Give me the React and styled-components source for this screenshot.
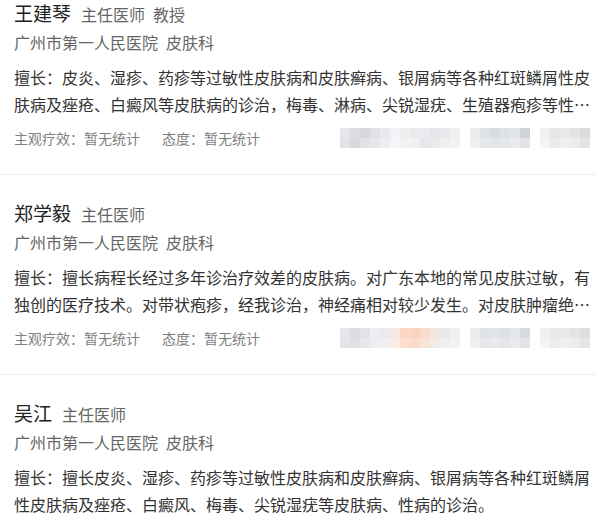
import React from "react"
import styled, { createGlobalStyle } from "styled-components"

const GlobalStyle = createGlobalStyle`
  body {
    margin: 0;
    background: #fff;
    font-family: "Noto Sans CJK SC", "Liberation Sans", sans-serif;
  }
`

const List = styled.div`
  margin-top: -25px;
`

const Card = styled.section`
  padding: 24px 3px 26px 14px;
  border-bottom: 1px solid #eeeeee;
`

const NameRow = styled.div`
  display: flex;
  align-items: baseline;
  height: 28px;
  line-height: 28px;
  overflow: hidden;
`

const Name = styled.span`
  font-size: 19px;
  color: #222;
`

const Title = styled.span`
  font-size: 16px;
  color: #666;
  margin-left: 10px;

  & + & {
    margin-left: 8px;
  }
`

const Hospital = styled.div`
  margin-top: 3px;
  font-size: 16px;
  line-height: 24px;
  height: 24px;
  color: #666;

  span + span {
    margin-left: 8px;
  }
`

const Desc = styled.p`
  margin: 10px 0 0;
  width: 580px;
  font-size: 16px;
  line-height: 27px;
  color: #333;
  display: -webkit-box;
  -webkit-box-orient: vertical;
  -webkit-line-clamp: 2;
  overflow: hidden;
`

const StatsRow = styled.div`
  margin-top: 10px;
  display: flex;
  align-items: center;
  height: 20px;
  padding-right: 4px;
`

const Stat = styled.span`
  font-size: 14px;
  color: #808080;

  & + & {
    margin-left: 22px;
  }
`

const MosaicBox = styled.svg`
  margin-left: auto;
  display: block;
`

const Mosaic = ({ cells }) => (
  <MosaicBox width="250" height="20" viewBox="0 0 250 20">
    {cells.map((row, r) =>
      row.map((c, i) =>
        c ? <rect key={r + "-" + i} x={i * 10} y={r * 10} width="10" height="10" fill={c} /> : null
      )
    )}
  </MosaicBox>
)

const grey1 = [
  ["#e6e7ea", "#dcdde2", "#d5d7dc", "#dfe1e5", "#e8eaee", "#f3f4f5", "#eeeff1", "#e9eaec", "#eaebee", "#e4e6e9", "#e8e9ec", "#eeeff0", null, "#eaecee", "#dfe2e7", "#d8dbe0", "#dee1e6", "#e2e4e8", "#cfd3dc", null, "#f0f0f1", "#e6e6e7", "#e8e8e9", "#e4e4e5", "#dcdcdd"],
  ["#e1e2e6", "#d8dae0", "#e0e2e6", "#e5e7eb", "#eceef1", "#f4f5f6", "#f1f2f3", "#eff0f1", "#e6e7ea", "#e9eaec", "#eeeff0", "#f2f2f3", null, "#eef0f2", "#e5e7eb", "#e2e5e9", "#e4e6ea", "#e8eaed", "#e2e4e8", null, "#f4f4f4", "#ebebec", "#efeff0", "#ececed", "#e3e3e4"],
]

const grey2 = [
  ["#e6e7ea", "#dcdde2", "#e1e3e7", "#eceef1", "#e8eaee", "#f6e9e2", "#fbd8c6", "#fcd3bd", "#f9dccc", "#f3e7e0", "#e8e9ec", "#eeeff0", null, "#eaecee", "#dfe2e7", "#e2e4e8", "#dee1e6", "#e4e6ea", "#d6d9e0", null, "#f0f0f1", "#e9e9ea", "#e8e8e9", "#e4e4e5", "#dedede"],
  ["#e3e4e8", "#dfe1e5", "#e6e8ec", "#eceef1", "#eef0f2", "#f8ece5", "#fbe0d1", "#fcdcc9", "#f7e3d8", "#f2ebe6", "#eeeff0", "#f2f2f3", null, "#eef0f2", "#e5e7eb", "#e8eaed", "#e4e6ea", "#e8eaed", "#e2e4e8", null, "#f4f4f4", "#ededee", "#efeff0", "#ececed", "#e5e5e6"],
]

const doctors = [
  {
    name: "王建琴",
    titles: ["主任医师", "教授"],
    desc: "擅长：皮炎、湿疹、药疹等过敏性皮肤病和皮肤癣病、银屑病等各种红斑鳞屑性皮肤病及痤疮、白癜风等皮肤病的诊治，梅毒、淋病、尖锐湿疣、生殖器疱疹等性病的诊断与治疗。",
    mosaic: grey1,
  },
  {
    name: "郑学毅",
    titles: ["主任医师"],
    desc: "擅长：擅长病程长经过多年诊治疗效差的皮肤病。对广东本地的常见皮肤过敏，有独创的医疗技术。对带状疱疹，经我诊治，神经痛相对较少发生。对皮肤肿瘤绝大多数可以手术治疗。",
    mosaic: grey2,
  },
  {
    name: "吴江",
    titles: ["主任医师"],
    desc: "擅长：擅长皮炎、湿疹、药疹等过敏性皮肤病和皮肤癣病、银屑病等各种红斑鳞屑性皮肤病及痤疮、白癜风、梅毒、尖锐湿疣等皮肤病、性病的诊治。",
    mosaic: grey1,
  },
]

export default function App() {
  return (
    <>
      <GlobalStyle />
      <List>
        {doctors.map((d) => (
          <Card key={d.name}>
            <NameRow>
              <Name>{d.name}</Name>
              {d.titles.map((t) => (
                <Title key={t}>{t}</Title>
              ))}
            </NameRow>
            <Hospital>
              <span>广州市第一人民医院</span>
              <span>皮肤科</span>
            </Hospital>
            <Desc>{d.desc}</Desc>
            <StatsRow>
              <Stat>主观疗效：暂无统计</Stat>
              <Stat>态度：暂无统计</Stat>
              <Mosaic cells={d.mosaic} />
            </StatsRow>
          </Card>
        ))}
      </List>
    </>
  )
}
